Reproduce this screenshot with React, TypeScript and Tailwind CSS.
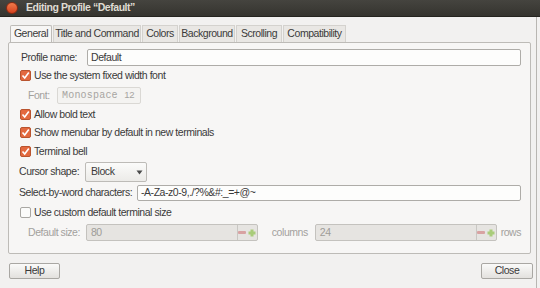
import React from "react";

const font = { fontFamily: '"Liberation Sans", Arial, sans-serif', letterSpacing: "-0.45px" };

function Check({ on, label, top }: { on: boolean; label: string; top: string }) {
  return (
    <div className={`flex items-center h-[17px] pl-[11px] ${top}`}>
      <span
        className={`w-[11px] h-[11px] rounded-[2px] flex items-center justify-center border ${
          on ? "bg-[#e3693f] border-[#b9542f]" : "bg-[#fbfbfa] border-[#a9a7a3]"
        }`}
      >
        {on && (
          <svg width="9" height="9" viewBox="0 0 9 9">
            <path d="M1.5 4.5 L3.7 7 L7.8 1.5" stroke="#fff" strokeWidth="1.6" fill="none" />
          </svg>
        )}
      </span>
      <span className="ml-[3px] text-[10.5px] text-[#3a3a3a] whitespace-nowrap">{label}</span>
    </div>
  );
}

function Spin({ value, width }: { value: string; width: string }) {
  return (
    <div className={`flex items-center h-[17px] ${width} border border-[#c4c2be] bg-[#e6e4e1] rounded-[2px]`}>
      <span className="flex-1 pl-[4px] text-[10.5px] text-[#9e9c98]">{value}</span>
      <span className="w-[10px] h-full flex items-center justify-center border-l border-[#c9c7c3]">
        <span className="w-[8px] h-[3px] bg-[#d8a2a2] rounded-[1px]" />
      </span>
      <span className="w-[10px] h-full flex items-center justify-center">
        <svg width="10" height="10" viewBox="0 0 10 10">
          <path d="M5 1.5 V8.5 M1.5 5 H8.5" stroke="#a9cc7a" strokeWidth="3" />
        </svg>
      </span>
    </div>
  );
}

export default function App() {
  const tabs = [
    { t: "General", w: "w-[42px]" },
    { t: "Title and Command", w: "w-[88px]" },
    { t: "Colors", w: "w-[36px]" },
    { t: "Background", w: "w-[56px]" },
    { t: "Scrolling", w: "w-[46px]" },
    { t: "Compatibility", w: "w-[63px]" },
  ];
  return (
    <div className="w-[540px] h-[288px] bg-[#f2f1f0] flex flex-col overflow-hidden" style={font}>
      {/* title bar */}
      <div className="h-[17px] flex items-center bg-gradient-to-b from-[#45443f] to-[#35342f] border-b border-[#25241f]">
        <span className="ml-[6px] w-[12px] h-[12px] rounded-full bg-gradient-to-b from-[#f07a4a] to-[#d5401c] border border-[#8a2a12]" />
        <span className="ml-[8px] text-[10.5px] font-bold text-[#dfdbd2] whitespace-nowrap">Editing Profile “Default”</span>
      </div>

      <div className="flex-1 flex border-r border-[#b8b6b2] mr-[3px] bg-[#f2f1f0]">
        <div className="flex-1 flex flex-col">
          {/* tabs */}
          <div className="flex items-end h-[25px] pl-[10px]">
            {tabs.map((t, i) => (
              <div
                key={t.t}
                className={`h-[17px] flex items-center justify-center ${t.w} text-[10.5px] text-[#3a3a3a] whitespace-nowrap border-t border-l border-r ${
                  i === 0
                    ? "bg-[#f7f6f5] border-[#bdbbb7] rounded-t-[2px] mr-[1px]"
                    : "bg-[#e9e7e4] border-[#d4d2ce] mr-[1px]"
                }`}
              >
                {t.t}
              </div>
            ))}
          </div>

          {/* panel */}
          <div className="ml-[8px] w-[523px] h-[212px] border border-[#bdbbb7] bg-[#f7f6f5] rounded-[2px] flex flex-col pr-[9px]">
            <div className="flex items-center h-[17px] pl-[12px] mt-[6px]">
              <span className="w-[66px] text-[10.5px] text-[#3a3a3a] whitespace-nowrap">Profile name:</span>
              <div className="flex-1 h-[17px] border border-[#aeaca8] bg-[#fdfdfc] rounded-[2px] flex items-center pl-[3px] text-[10.5px] text-[#3a3a3a]">
                Default
              </div>
            </div>
            <Check on label="Use the system fixed width font" top="mt-[1px]" />
            <div className="flex items-center h-[17px] pl-[19px] mt-[3px]">
              <span className="w-[29px] text-[10.5px] text-[#a3a19d]">Font:</span>
              <div className="w-[84px] h-[17px] border border-[#dad8d4] rounded-[2px] bg-[#f4f3f1] flex items-center justify-between px-[4px]">
                <span
                  className="text-[10px] text-[#a7a5a1]"
                  style={{ fontFamily: '"Liberation Mono", "DejaVu Sans Mono", monospace', letterSpacing: "0.2px" }}
                >
                  Monospace
                </span>
                <span className="text-[9.5px] text-[#a7a5a1] mr-[2px]">12</span>
              </div>
            </div>
            <Check on label="Allow bold text" top="mt-[2px]" />
            <Check on label="Show menubar by default in new terminals" top="mt-[1px]" />
            <Check on label="Terminal bell" top="mt-[2px]" />
            <div className="flex items-center h-[20px] pl-[10px] mt-[2px]">
              <span className="w-[66px] text-[10.5px] text-[#3a3a3a] whitespace-nowrap">Cursor shape:</span>
              <div className="w-[62px] h-[20px] border border-[#bdbbb7] rounded-[2px] bg-gradient-to-b from-[#fbfbfa] to-[#ecebe8] flex items-center">
                <span className="flex-1 pl-[5px] text-[10.5px] text-[#3a3a3a]">Block</span>
                <span className="w-[14px] flex items-center justify-center">
                  <svg width="7" height="5" viewBox="0 0 7 5">
                    <path d="M0.5 0.5 H6.5 L3.5 4.5 Z" fill="#4a4a4a" />
                  </svg>
                </span>
              </div>
            </div>
            <div className="flex items-center h-[16px] pl-[10px] mt-[3px]">
              <span className="w-[118px] text-[10.5px] text-[#3a3a3a] whitespace-nowrap">Select-by-word characters:</span>
              <div className="flex-1 h-[16px] border border-[#aeaca8] bg-[#fdfdfc] rounded-[2px] flex items-center pl-[3px] text-[10.5px] text-[#3a3a3a]">
                -A-Za-z0-9,./?%&amp;#:_=+@~
              </div>
            </div>
            <Check on={false} label="Use custom default terminal size" top="mt-[3px]" />
            <div className="flex items-center h-[17px] pl-[19px] mt-[3px]">
              <span className="w-[58px] text-[10.5px] text-[#a3a19d] whitespace-nowrap">Default size:</span>
              <Spin value="80" width="w-[172px]" />
              <span className="ml-[14px] w-[43px] text-[10.5px] text-[#a3a19d]">columns</span>
              <Spin value="24" width="w-[182px]" />
              <span className="ml-[4px] text-[10.5px] text-[#a3a19d]">rows</span>
            </div>
          </div>

          {/* buttons */}
          <div className="flex justify-between items-center mt-[9px] pl-[9px] pr-[3px]">
            <button className="w-[51px] h-[16px] border border-[#a9a7a3] rounded-[2px] bg-gradient-to-b from-[#fafaf9] to-[#e3e1de] text-[10.5px] text-[#3a3a3a] flex items-center justify-center">
              Help
            </button>
            <button className="w-[52px] h-[16px] border border-[#a9a7a3] rounded-[2px] bg-gradient-to-b from-[#fafaf9] to-[#e3e1de] text-[10.5px] text-[#3a3a3a] flex items-center justify-center">
              Close
            </button>
          </div>
        </div>
      </div>
    </div>
  );
}
